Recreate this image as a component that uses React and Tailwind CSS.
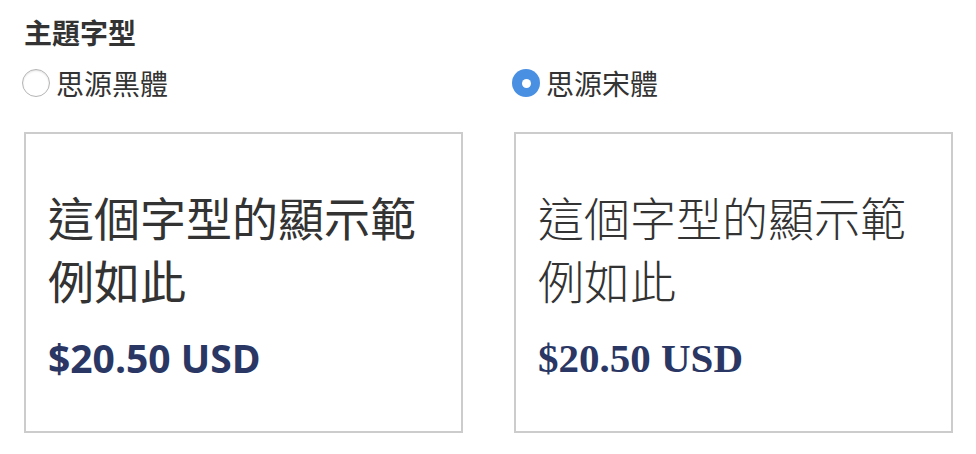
const options = [
  {
    label: "思源黑體",
    checked: false,
    cjk: "font-['Noto_Sans_CJK_TC','Noto_Sans',sans-serif]",
    price: "font-['Open_Sans','Noto_Sans',sans-serif] font-bold text-[39px]",
  },
  {
    label: "思源宋體",
    checked: true,
    cjk: "font-['Noto_Sans_CJK_TC',serif] font-light",
    price: "font-['Liberation_Serif',serif] font-bold text-[41px]",
  },
];

const Radio = ({ checked }) =>
  checked ? (
    <span className="w-[28px] h-[28px] rounded-full bg-[#4a90e2] flex items-center justify-center shrink-0">
      <span className="w-[9px] h-[9px] rounded-full bg-white" />
    </span>
  ) : (
    <span className="w-[28px] h-[28px] rounded-full border border-[#b5b5b5] bg-white shadow-[inset_0_1px_2px_rgba(0,0,0,0.12)] shrink-0" />
  );

export default function App() {
  return (
    <div className="w-[976px] h-[454px] bg-white text-[#333] font-['Noto_Sans_CJK_TC','Noto_Sans',sans-serif] pl-[24px] pr-[23px] pt-[12px]">
      <h3 className="text-[28px] leading-[40px] font-bold">主題字型</h3>

      <div className="grid grid-cols-2 gap-x-[51px] mt-[11px]">
        {options.map((o) => (
          <label key={o.label} className="flex items-center gap-[6px] h-[40px] -ml-[2px]">
            <Radio checked={o.checked} />
            <span className="text-[28px] leading-[40px]">{o.label}</span>
          </label>
        ))}

        {options.map((o) => (
          <div
            key={o.label + "-card"}
            className="mt-[29px] h-[301px] border-2 border-[#cccccc] pl-[22px] pr-[20px] pt-[51px]"
          >
            <p className={`${o.cjk} text-[46px] leading-[63px] text-[#333]`}>
              這個字型的顯示範例如此
            </p>
            <p className={`${o.price} leading-[56px] text-[#2a3663] mt-[19px]`}>
              $20.50 USD
            </p>
          </div>
        ))}
      </div>
    </div>
  );
}
